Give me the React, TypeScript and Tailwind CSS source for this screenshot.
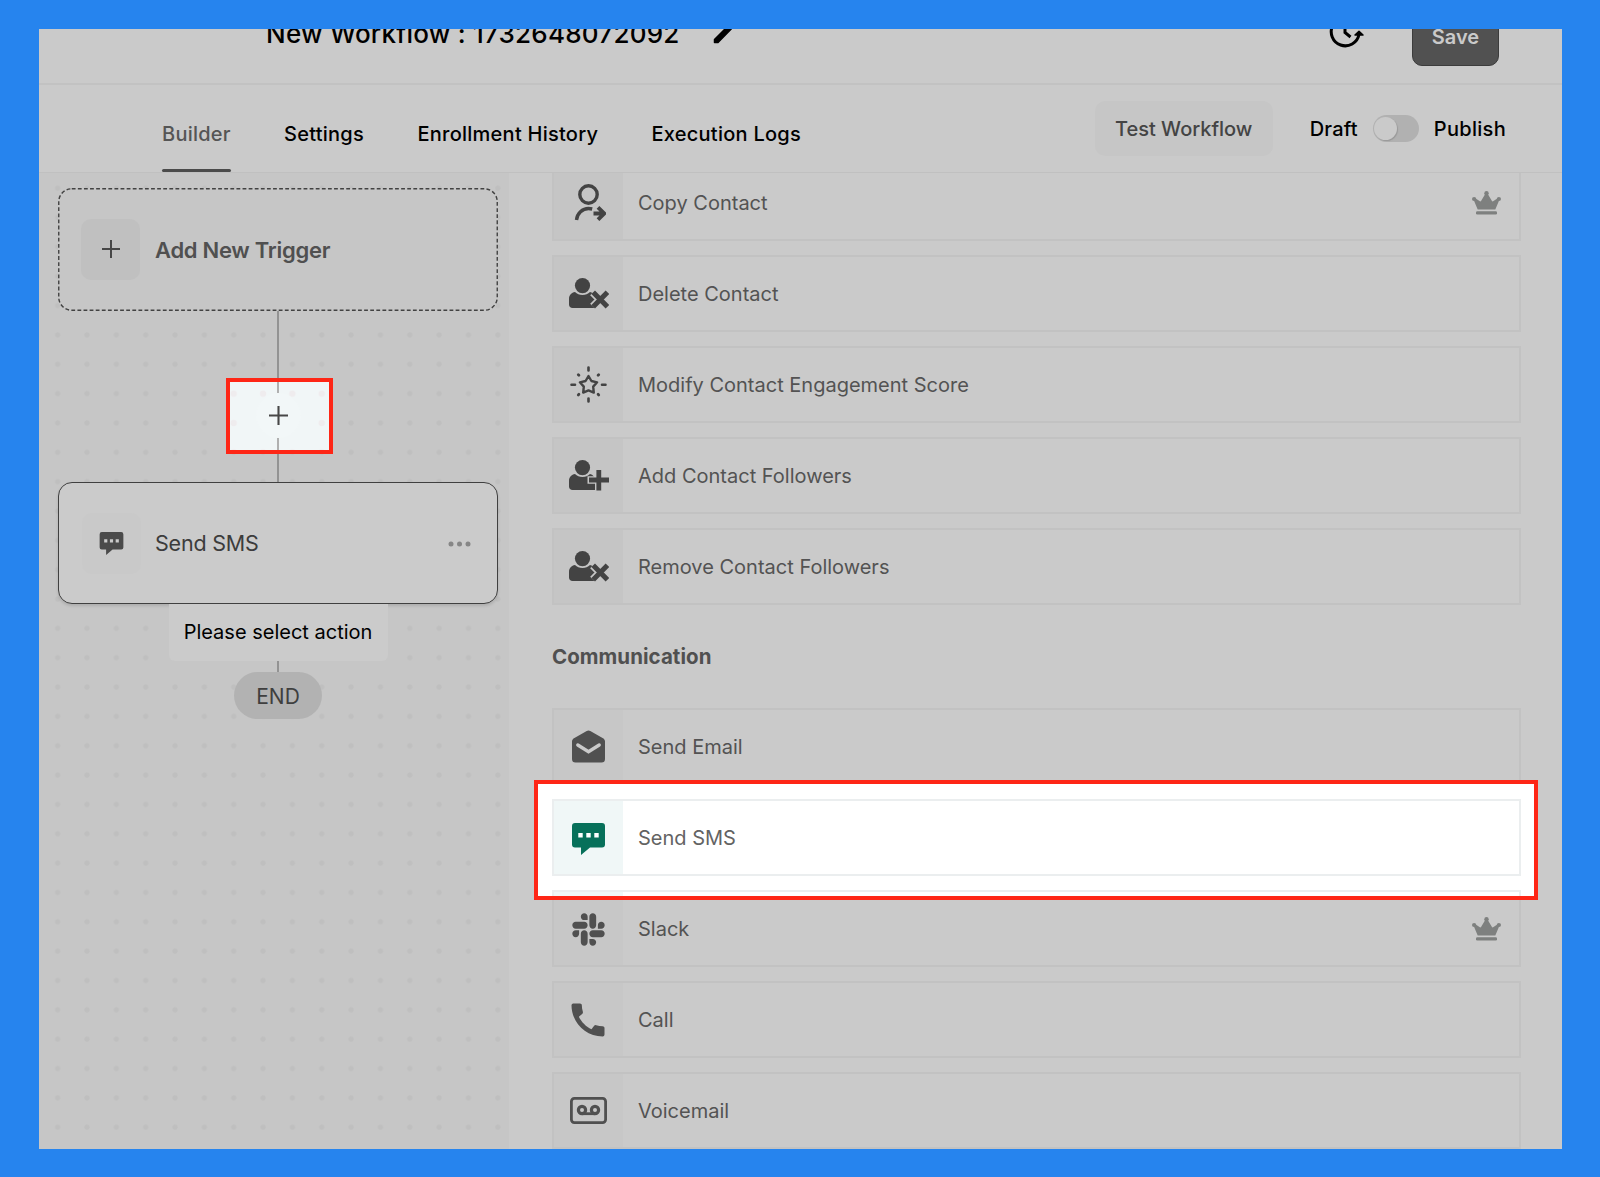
import { useState } from "react";
import type { ReactNode } from "react";
import clsx from "clsx";
import { FaSlack } from "react-icons/fa";
import { MdCall } from "react-icons/md";

interface Action {
  label: string;
  icon: ReactNode;
  premium?: boolean;
}

const tabs = [
  { name: "Builder", className: "w-[69px]" },
  { name: "Settings", className: "w-[80.500px]" },
  { name: "Enrollment History", className: "w-[181px]" },
  { name: "Execution Logs", className: "w-[150px]" },
];

function CopyContactIcon() {
  return (
    <svg className="ml-[3px]" width="32" height="37" viewBox="0 0 32 37" fill="none" stroke="currentColor" strokeWidth="3.400">
      <circle cx="14.500" cy="10.500" r="8.700" />
      <path d="M2.500 36c.6-6.600 6-11.500 12-11.500 1.300 0 2.500.2 3.700.5" />
      <path d="M19.500 29.500h10M24 23.300l6.200 6.200-6.200 6.200" strokeWidth="3.800" />
    </svg>
  );
}

function Person({ children }: { children: ReactNode }) {
  return (
    <svg className="ml-px" width="40" height="31" viewBox="0 0 40 31">
      <circle cx="13.500" cy="7.600" r="7.600" fill="currentColor" />
      <path
        d="M6 14c2 2 4.500 3 7.500 3s5.500-1 7.500-3c3 .6 5 3 5 6.500V30H3.500C1.500 30 0 28.500 0 26.500V21c0-4 2.500-6.500 6-7z"
        fill="currentColor"
      />
      {children}
    </svg>
  );
}

function PersonRemoveIcon() {
  return (
    <Person>
      <path d="M24 14.500l14 14M38 14.500l-14 14" stroke="#c5c5c5" strokeWidth="8" />
      <path d="M24.200 14.200l14.200 14.600M38.400 14.200l-14.200 14.600" stroke="currentColor" strokeWidth="5" />
    </Person>
  );
}

function PersonAddIcon() {
  return (
    <Person>
      <path d="M18.500 20h21M29.800 9.500v21" stroke="#c5c5c5" strokeWidth="7.500" />
      <path d="M20 20h20M29.800 10v20.500" stroke="currentColor" strokeWidth="4.800" />
    </Person>
  );
}

function ScoreIcon() {
  return (
    <svg
      width="37"
      height="37"
      viewBox="0 0 37 37"
      fill="none"
      stroke="currentColor"
      strokeWidth="2.400"
      strokeLinecap="round"
      strokeLinejoin="round"
    >
      <path d="M18.500 10l2.900 5 5.700 1.300-3.900 4.300.6 6-5.300-2.200-5.300 2.200.6-6-3.900-4.300 5.700-1.300z" />
      <path d="M18.500 1.500v3M18.500 32.500v3M1.500 18.800h3.500M32 18.800h3.500" strokeWidth="2.600" />
      <path d="M8.300 8.700l.6.6M28.700 8.700l-.6.6M8.300 28.900l.6-.6M28.700 28.900l-.6-.6" strokeWidth="2.800" />
    </svg>
  );
}

function MailOpenIcon() {
  return (
    <svg width="33" height="33" viewBox="0 0 33 33">
      <path
        d="M14.700 1.100a3.600 3.600 0 0 1 3.600 0L31 8.300c1.200.7 2 1.900 2 3.200V29a3.500 3.500 0 0 1-3.500 3.500h-26A3.500 3.500 0 0 1 0 29V11.500c0-1.300.8-2.500 2-3.200z"
        fill="currentColor"
      />
      <path d="M5.800 15l10.700 6.800L27.200 15" fill="none" stroke="#cacaca" strokeWidth="3.400" strokeLinecap="round" />
    </svg>
  );
}

function SmsIcon({ className, dots = "#cacaca" }: { className?: string; dots?: string }) {
  return (
    <svg className={clsx("h-8 w-[33px]", className)} viewBox="0 0 33 32">
      <path
        d="M3 0h27a3 3 0 0 1 3 3v18.500a3 3 0 0 1-3 3H18L9 32v-7.500H3a3 3 0 0 1-3-3V3a3 3 0 0 1 3-3z"
        fill="currentColor"
      />
      <path d="M6.300 10h4.400v4.600H6.300zM14.300 10h4.400v4.600h-4.400zM22.300 10h4.400v4.600h-4.400z" fill={dots} />
    </svg>
  );
}

function VoicemailIcon() {
  return (
    <svg width="37" height="27" viewBox="0 0 37 27" fill="none" stroke="currentColor" strokeWidth="2.800">
      <rect x="1.400" y="1.400" width="34.200" height="24.200" rx="3" />
      <circle cx="12" cy="13" r="3.600" strokeWidth="3.200" />
      <circle cx="25" cy="13" r="3.600" strokeWidth="3.200" />
      <path d="M12 16.700h13" />
    </svg>
  );
}

function CrownIcon() {
  return (
    <svg className="text-[#7e807f]" width="29" height="24" viewBox="0 0 29 24" fill="currentColor">
      <circle cx="14.500" cy="2.200" r="2.200" />
      <circle cx="2.100" cy="8" r="2.100" />
      <circle cx="26.900" cy="8" r="2.100" />
      <path d="M13.500 2.500h2l4.300 7.200c.4.700 1 .9 1.700.4L26 7l1.500 1.500-4.200 10H5.700L1.500 8.500 3 7l4.500 3.100c.7.500 1.300.3 1.700-.4z" />
      <rect x="4" y="20.300" width="21" height="3.200" rx="1.300" />
    </svg>
  );
}

function Plus({ size }: { size: number }) {
  return (
    <svg width={size} height={size} viewBox="0 0 20 20" stroke="#474747" strokeWidth="2.200">
      <path d="M10 0v20M0 10h20" />
    </svg>
  );
}

const contactActions: Action[] = [
  { label: "Copy Contact", icon: <CopyContactIcon />, premium: true },
  { label: "Delete Contact", icon: <PersonRemoveIcon /> },
  { label: "Modify Contact Engagement Score", icon: <ScoreIcon /> },
  { label: "Add Contact Followers", icon: <PersonAddIcon /> },
  { label: "Remove Contact Followers", icon: <PersonRemoveIcon /> },
];

const communicationActions: Action[] = [
  { label: "Send Email", icon: <MailOpenIcon /> },
  { label: "Send SMS", icon: <SmsIcon className="mt-[2px]" dots="#fff" /> },
  { label: "Slack", icon: <FaSlack className="mt-px" size={37} />, premium: true },
  { label: "Call", icon: <MdCall size={44} /> },
  { label: "Voicemail", icon: <VoicemailIcon /> },
];

function ActionRow({ action, active, muted }: { action: Action; active?: boolean; muted?: boolean }) {
  return (
    <div
      className={clsx(
        "flex h-[77px] shrink-0 items-stretch border-2",
        active ? "border-[#ebeeef] bg-white" : "border-[#c2c2c2] bg-[#cacaca]",
      )}
    >
      <div
        className={clsx(
          "flex w-[69px] items-center justify-center pr-px",
          active && "bg-[#f0f7f7] text-[#07705a]",
          !active && (muted ? "bg-[#c7c7c7] text-[#505050]" : "bg-[#c5c5c5] text-[#434343]"),
        )}
      >
        {action.icon}
      </div>
      <div className="flex flex-1 items-center justify-between pr-[18px] pl-[15px]">
        <span className={clsx("text-[20px]", active ? "text-[#636363]" : "text-[#535353]")}>{action.label}</span>
        {action.premium && <CrownIcon />}
      </div>
    </div>
  );
}

function Header() {
  return (
    <header className="flex h-[56px] shrink-0 items-start border-b-2 border-[#c2c2c2] pr-[63px] pl-[227px]">
      <h1 className="-mt-[11px] text-[26px] leading-[32px] font-medium tracking-[0.23px] whitespace-nowrap text-black">
        New Workflow : 1732648072092
      </h1>
      <svg className="-mt-[5px] ml-[33px]" width="20" height="20" viewBox="0 0 20 20">
        <path
          d="M1.500 18.500v-3L15 2l3.200 3L5 18.500z"
          stroke="#000"
          strokeWidth="1.500"
          strokeLinejoin="round"
        />
      </svg>
      <div className="ml-auto flex items-start">
        <svg
          className="-mt-[14px] mr-[47px]"
          width="36"
          height="36"
          viewBox="0 0 36 36"
          fill="none"
          stroke="#000"
          strokeWidth="3"
        >
          <path d="M24.500 5.500A14 14 0 1 0 30 19.500" />
          <path d="M16 10v7.500l5.500 4.500" />
          <path d="M26 20l4-3.800 4 3.800z" fill="#000" strokeWidth="1.500" strokeLinejoin="round" />
        </svg>
        <button className="-mt-[18px] h-[55px] w-[87px] rounded-[10px] border border-[#3c3c3c] bg-[#515151] pb-[4px] text-[20px] font-semibold text-[#cacaca]">
          Save
        </button>
      </div>
    </header>
  );
}

function Toolbar() {
  const [tab, setTab] = useState("Builder");
  const [published, setPublished] = useState(false);

  return (
    <div className="flex h-[88px] shrink-0 border-b border-[#c0c0c0] pr-[56px] pl-[123px]">
      <nav className="flex gap-[53px]">
        {tabs.map((t) => (
          <button
            key={t.name}
            onClick={() => setTab(t.name)}
            className={clsx(
              "flex flex-col items-start justify-end text-[20px] font-medium tracking-[0.25px] whitespace-nowrap",
              t.className,
              tab === t.name ? "text-[#555]" : "text-black",
            )}
          >
            <span className="pb-[21.500px] leading-[28px]">{t.name}</span>
            <span className={clsx("h-[3px] w-full rounded-full", tab === t.name && "bg-[#4b4b4b]")} />
          </button>
        ))}
      </nav>
      <div className="ml-auto flex h-[87px] items-center text-[20px] font-medium">
        <button className="mr-[37px] h-[55px] w-[178px] rounded-[10px] bg-[#c6c6c6] text-[#444]">Test Workflow</button>
        <span className="tracking-[0.2px]">Draft</span>
        <button
          onClick={() => setPublished(!published)}
          className={clsx(
            "mx-[15px] flex h-[27px] w-[46px] items-center rounded-full bg-[#b1b1b1] px-[1.500px]",
            published && "justify-end",
          )}
        >
          <span className="size-[23px] rounded-full bg-[#cacaca] shadow-[1px_1px_1px_#999]" />
        </button>
        <span className="tracking-[0.3px]">Publish</span>
      </div>
    </div>
  );
}

function Canvas() {
  return (
    <div className="w-[470px] shrink-0 bg-[#c6c6c6] bg-[radial-gradient(circle,#bfbfbf_2.3px,transparent_3px)] bg-[size:29.35px_29.35px] bg-[position:4px_0.500px] pt-[15px] pl-[19px]">
      <div className="flex w-[440px] flex-col items-center">
        <div className="relative flex h-[123px] w-full items-center rounded-[13px] bg-[#c6c6c6] pl-[23px]">
          <svg className="absolute inset-0" width="440" height="123" fill="none">
            <rect
              x="0.750"
              y="0.750"
              width="438.500"
              height="121.500"
              rx="13"
              stroke="#424242"
              strokeWidth="1.400"
              strokeDasharray="3.800 2.300"
            />
          </svg>
          <div className="mr-[15px] flex h-[61px] w-[59px] items-center justify-center rounded-[10px] bg-[#c0c0c0] pb-[2px]">
            <Plus size={18} />
          </div>
          <span className="pt-[2px] text-[22px] font-semibold tracking-[-0.28px] text-[#505050]">Add New Trigger</span>
        </div>

        <div className="relative flex h-[171px] w-full justify-center">
          <div className="w-[1.500px] bg-[#939393]" />
          {/* highlighted add-step button */}
          <div className="absolute top-[67px] left-[168px] h-[76px] w-[107px] overflow-hidden border-4 border-[#fe2616] bg-[#f1f6f7] bg-[radial-gradient(circle,#efecee_3px,transparent_3.6px)] bg-[size:29.35px_29.35px] bg-[position:-11px_-3px]">
            <div className="flex h-full w-[96px] flex-col items-center">
              <div className="h-[11px] w-[1.500px] bg-[#b0b0b0]" />
              <div className="flex h-[45px] w-[45px] items-center justify-center rounded-full bg-[#f2f7f8]">
                <Plus size={19} />
              </div>
              <div className="w-[1.500px] flex-1 bg-[#b0b0b0]" />
            </div>
          </div>
        </div>

        <div className="flex h-[122px] w-full items-center rounded-[14px] border-[1.500px] border-[#404040] bg-[#cbcbcb] pr-[26px] pl-[23px] shadow-[0_2px_3px_rgba(0,0,0,0.12)]">
          <div className="mr-[14px] flex h-[61px] w-[59px] items-center justify-center rounded-[10px] bg-[#c9c9c9] text-[#4a4a4a]">
            <SmsIcon className="h-[23px] w-[24px]" />
          </div>
          <span className="pt-px text-[21.500px] tracking-[-0.200px] text-[#3c3c3c]">Send SMS</span>
          <svg className="mt-px ml-auto" width="23" height="6" fill="#868686">
            <circle cx="3" cy="3" r="2.500" />
            <circle cx="11.500" cy="3" r="2.500" />
            <circle cx="20" cy="3" r="2.500" />
          </svg>
        </div>

        <div className="flex h-[57px] w-[219px] items-center justify-center rounded-b-[6px] bg-[#cbcbcb] pb-[2px] text-[20px] text-black">
          Please select action
        </div>
        <div className="h-[11px] w-[1.500px] bg-[#939393]" />
        <div className="flex h-[47px] w-[88px] items-center justify-center rounded-full bg-[#b2b2b2] pt-[2px] text-[21px] text-[#3f3f3f]">
          END
        </div>
      </div>
    </div>
  );
}

function ActionPanel() {
  return (
    <div className="flex flex-1 flex-col overflow-hidden bg-[#cacaca] pr-[41px] pl-[43px]">
      <div className="-mt-[9px] flex flex-col gap-[14px]">
        {contactActions.map((a) => (
          <ActionRow key={a.label} action={a} />
        ))}
      </div>
      <h2 className="mt-[37px] mb-[36px] text-[20.500px] leading-[30px] font-bold tracking-[0.05px] text-[#505050]">
        Communication
      </h2>
      <div className="flex flex-col gap-[14px]">
        {communicationActions.map((a) =>
          a.label === "Send SMS" ? (
            <div key={a.label} className="relative h-[77px]">
              <div className="absolute -top-[19px] -right-[17px] -left-[18px] z-10 h-[120px] overflow-hidden border-4 border-[#fe2616] bg-white pt-[15px] pr-[13px] pl-[14px]">
                <ActionRow action={a} active />
                {/* top edge of the following row, seen inside the highlight */}
                <div className="mt-[14px] h-[20px] border-2 border-[#ebeeef]">
                  <div className="h-full w-[69px] bg-[#f0f7f7]" />
                </div>
              </div>
            </div>
          ) : (
            <ActionRow key={a.label} action={a} muted />
          ),
        )}
      </div>
    </div>
  );
}

export default function App() {
  return (
    <div className="h-[1177px] w-[1600px] overflow-hidden bg-[#2684ee] pt-[29px] pl-[39px] font-['Inter','Liberation_Sans',sans-serif]">
      <div className="flex h-[1119.500px] w-[1523px] flex-col overflow-hidden bg-[#cacaca]">
        <Header />
        <Toolbar />
        <div className="flex min-h-0 flex-1">
          <Canvas />
          <ActionPanel />
        </div>
      </div>
    </div>
  );
}
